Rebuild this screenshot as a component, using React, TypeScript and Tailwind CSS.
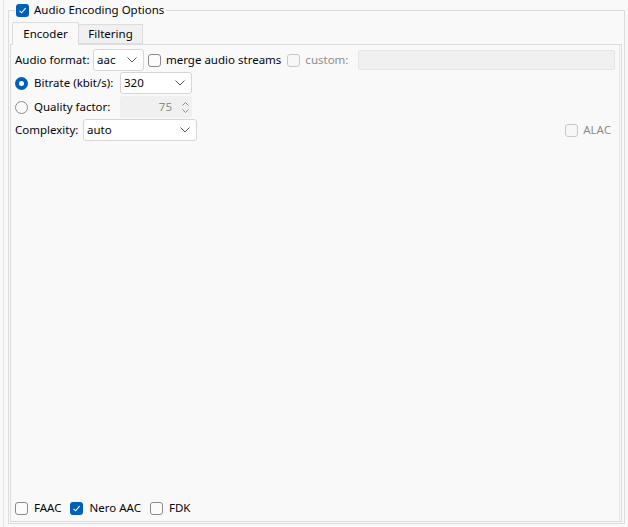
import React from "react";

const font = { fontFamily: '"Segoe UI", "Noto Sans", "Open Sans", sans-serif' };

function CheckBox({ checked = false, disabled = false }: { checked?: boolean; disabled?: boolean }) {
  if (checked) {
    return (
      <span className="w-[13px] h-[13px] rounded-[3px] bg-[#005fb8] flex items-center justify-center shrink-0">
        <svg width="9" height="9" viewBox="0 0 9 9">
          <path d="M1.5 4.8 L3.6 6.8 L7.6 2.2" fill="none" stroke="#ffffff" strokeWidth="1.1" />
        </svg>
      </span>
    );
  }
  return (
    <span
      className={
        disabled
          ? "block w-[13px] h-[13px] rounded-[3px] border border-[#c8c8c8] bg-[#f7f7f7] shrink-0"
          : "block w-[13px] h-[13px] rounded-[3px] border border-[#8a8a8a] bg-[#fbfbfb] shrink-0"
      }
    />
  );
}

function Radio({ checked = false }: { checked?: boolean }) {
  if (checked) {
    return (
      <span className="w-[13px] h-[13px] rounded-full bg-[#005fb8] flex items-center justify-center shrink-0">
        <span className="block w-[5px] h-[5px] rounded-full bg-white" />
      </span>
    );
  }
  return <span className="block w-[13px] h-[13px] rounded-full border border-[#8a8a8a] bg-[#fbfbfb] shrink-0" />;
}

function Chevron() {
  return (
    <svg width="10" height="6" viewBox="0 0 10 6" className="shrink-0">
      <path d="M0.5 0.5 L5 5 L9.5 0.5" fill="none" stroke="#555555" strokeWidth="1" />
    </svg>
  );
}

function Combo({ text, w }: { text: string; w: string }) {
  return (
    <div
      className={`${w} h-[22px] bg-white border border-[#d6d6d6] rounded-[3px] flex items-center pl-[3px] pr-[6px] justify-between shrink-0`}
    >
      <span>{text}</span>
      <Chevron />
    </div>
  );
}

export default function App() {
  return (
    <div
      className="w-[628px] h-[527px] bg-[#f9f9f9] pl-[3px] flex text-[11.5px] text-[#05050c] leading-none"
      style={font}
    >
      <div className="flex-1 border-l border-[#e2e2e2] pl-[4px] pt-[10px] pr-[3px] pb-[3px] flex">
        <div className="relative flex-1 border border-[#dcdcdc] pl-[1px] pr-[2px] pb-[1px] pt-[10px] flex flex-col">
          <div className="absolute left-[6px] top-[-8px] bg-[#f9f9f9] pl-[1px] pr-[2px] flex items-center gap-[5px] h-[14px]">
            <CheckBox checked />
            <span>Audio Encoding Options</span>
          </div>
          <div className="flex items-end h-[23px] pl-[2px] relative z-10">
            <div className="h-[23px] w-[67px] bg-[#f9f9f9] border border-[#dcdcdc] border-b-0 rounded-t-[2px] flex items-center justify-center pb-[1px] -mb-px">
              Encoder
            </div>
            <div className="h-[20px] w-[64px] bg-[#f0f0f0] border border-[#dcdcdc] border-l-0 flex items-center justify-center">
              Filtering
            </div>
          </div>
          <div className="flex-1 border border-[#dcdcdc] pr-[1px] flex">
            <div className="flex-1 border-r border-[#e6e6e6] pl-[4px] pt-[4px] pb-[6px] pr-[4px] flex flex-col">
              <div className="flex items-center h-[22px]">
                <span className="w-[78px]">Audio format:</span>
                <Combo text="aac" w="w-[51px]" />
                <span className="ml-[4px] flex"><CheckBox /></span>
                <span className="ml-[5px]">merge audio streams</span>
                <span className="ml-[6px] flex"><CheckBox disabled /></span>
                <span className="ml-[5px] text-[#8c8c8c]">custom:</span>
                <div className="ml-[10px] flex-1 h-[20px] bg-[#f0f0f0] border border-[#e6e6e6] rounded-[2px]" />
              </div>
              <div className="flex items-center h-[22px] mt-[1px]">
                <Radio checked />
                <span className="ml-[6px] w-[86px]">Bitrate (kbit/s):</span>
                <Combo text="320" w="w-[72px]" />
              </div>
              <div className="flex items-center h-[22px] mt-[2px]">
                <Radio />
                <span className="ml-[6px] w-[86px]">Quality factor:</span>
                <div className="w-[72px] h-[22px] bg-[#f0f0f0] rounded-[3px] flex items-center justify-end pr-[1px]">
                  <span className="text-[#8c8c8c] mr-[7px]">75</span>
                  <div className="flex flex-col gap-[3px] w-[12px] items-center">
                    <svg width="7" height="4" viewBox="0 0 7 4">
                      <path d="M0.5 3.5 L3.5 0.5 L6.5 3.5" fill="none" stroke="#8a8a8a" strokeWidth="1" />
                    </svg>
                    <svg width="7" height="4" viewBox="0 0 7 4">
                      <path d="M0.5 0.5 L3.5 3.5 L6.5 0.5" fill="none" stroke="#8a8a8a" strokeWidth="1" />
                    </svg>
                  </div>
                </div>
              </div>
              <div className="flex items-center h-[22px] mt-[1px]">
                <span className="w-[68px]">Complexity:</span>
                <Combo text="auto" w="w-[114px]" />
                <div className="flex-1" />
                <CheckBox disabled />
                <span className="ml-[5px] mr-[4px] text-[#8c8c8c]">ALAC</span>
              </div>
              <div className="flex-1" />
              <div className="flex items-center h-[14px]">
                <CheckBox />
                <span className="ml-[6px]">FAAC</span>
                <span className="ml-[9px] flex"><CheckBox checked /></span>
                <span className="ml-[6px]">Nero AAC</span>
                <span className="ml-[9px] flex"><CheckBox /></span>
                <span className="ml-[6px]">FDK</span>
              </div>
            </div>
          </div>
        </div>
      </div>
    </div>
  );
}
